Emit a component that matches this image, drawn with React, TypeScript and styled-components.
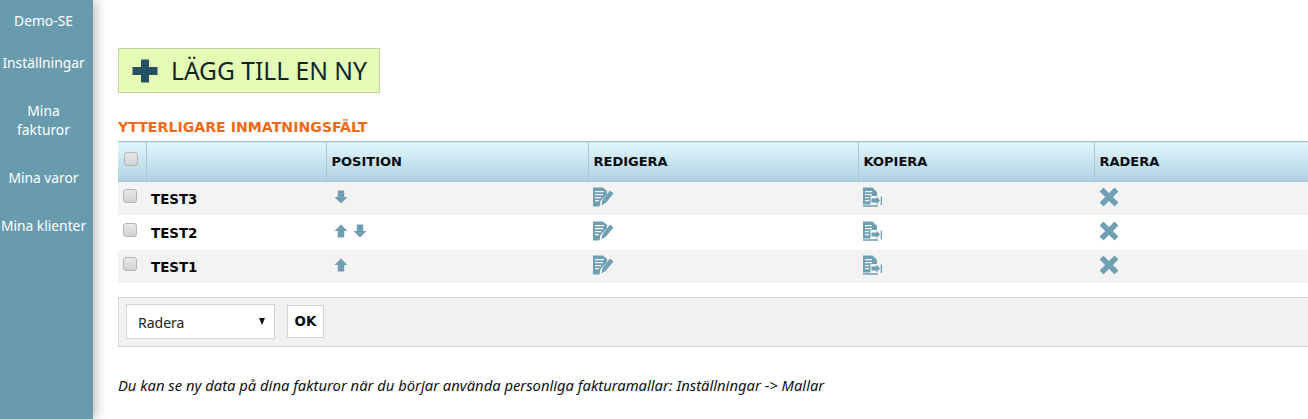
import React from "react";
import styled, { createGlobalStyle } from "styled-components";

const Global = createGlobalStyle`
  html, body { margin: 0; padding: 0; background: #fff; overflow: hidden; }
  body { font-family: "Noto Sans", "DejaVu Sans", sans-serif; }
`;

const Page = styled.div`
  display: flex;
  width: 1308px;
  height: 419px;
  overflow: hidden;
`;

const Sidebar = styled.nav`
  flex: 0 0 93px;
  height: 419px;
  background: #699bae;
  box-shadow: 2px 0 12px rgba(0, 0, 0, 0.3);
  display: flex;
  flex-direction: column;
  align-items: center;
  padding: 11px 6px 0 0;
  box-sizing: border-box;
`;

const NavItem = styled.a<{ $gap: number }>`
  color: #fff;
  font-size: 13.8px;
  line-height: 19px;
  text-align: center;
  white-space: pre;
  margin-bottom: ${(p) => p.$gap}px;
`;

const Main = styled.main`
  flex: 1;
  min-width: 0;
  padding: 48px 0 0 25px;
`;

const AddButton = styled.button`
  display: flex;
  align-items: center;
  gap: 13px;
  width: 262px;
  height: 45px;
  padding: 0 0 0 13px;
  box-sizing: border-box;
  background: #e5fcb6;
  border: 1px solid #c3d2a4;
  color: #0f2527;
  font-family: "Noto Sans", sans-serif;
  font-size: 24.6px;
  white-space: nowrap;
`;

const Heading = styled.h2`
  margin: 25px 0 5px;
  color: #ef6a17;
  font-family: "DejaVu Sans", sans-serif;
  font-size: 14.15px;
  line-height: 18px;
  font-weight: 700;
  white-space: nowrap;
`;

const Table = styled.table`
  border-collapse: collapse;
  table-layout: fixed;
  width: 1190px;
`;

const Head = styled.th<{ $w: number }>`
  width: ${(p) => p.$w}px;
  height: 40px;
  padding: 0 0 0 5px;
  box-sizing: border-box;
  background: linear-gradient(#e2f7fe, #aed0e0);
  border-top: 1px solid #a5c8d6;
  border-bottom: 1px solid #a5c8d6;
  border-left: 1px solid #a5c8d6;
  text-align: left;
  font-family: "DejaVu Sans", sans-serif;
  font-size: 13px;
  font-weight: 700;
  color: #050c10;
  &:first-child {
    border-left: none;
    padding-left: 6px;
  }
`;

const Row = styled.tr<{ $shade: boolean }>`
  height: ${(p) => (p.$shade ? 33 : 35)}px;
  background: ${(p) => (p.$shade ? "#f3f3f3" : "#fff")};
`;

const Cell = styled.td`
  padding: 0 0 0 5px;
  vertical-align: middle;
`;

const IconCell = styled(Cell)`
  padding-bottom: 3px;
`;

const NameCell = styled(Cell)`
  padding-top: 2px;
  font-family: "DejaVu Sans", sans-serif;
  font-size: 13.4px;
  font-weight: 700;
  color: #050505;
`;

const Check = styled.span`
  display: block;
  width: 12px;
  height: 12px;
  margin: -5px 0 0 0;
  border: 1px solid #b5b5b5;
  border-radius: 3px;
  background: linear-gradient(#e9e9e9, #d2d2d2);
`;

const Icons = styled.span`
  display: flex;
  align-items: center;
  gap: 5px;
  margin-left: 3px;
`;

const IconSvg = styled.svg`
  display: block;
  fill: #6f9fb2;
`;

const BulkBar = styled.div`
  display: flex;
  align-items: center;
  margin-top: 14px;
  width: 1200px;
  height: 50px;
  padding-left: 7px;
  box-sizing: border-box;
  background: #f1f1f1;
  border: 1px solid #d4d4d4;
`;

const SelectBox = styled.div`
  display: flex;
  align-items: center;
  justify-content: space-between;
  width: 149px;
  height: 35px;
  padding: 0 9px 0 11px;
  box-sizing: border-box;
  background: #fff;
  border: 1px solid #d4d4d4;
  font-size: 14px;
  color: #222;
`;

const SelectLabel = styled.span`
  padding-top: 2px;
`;

const Caret = styled.span`
  width: 0;
  height: 0;
  border-left: 3.5px solid transparent;
  border-right: 3.5px solid transparent;
  border-top: 7px solid #111;
`;

const OkButton = styled.button`
  width: 37px;
  height: 33px;
  margin-left: 12px;
  padding: 0;
  background: #fff;
  border: 1px solid #d4d4d4;
  font-family: "DejaVu Sans", sans-serif;
  font-size: 13.4px;
  font-weight: 700;
  color: #0a0a0a;
`;

const Note = styled.p`
  margin: 29px 0 0;
  font-size: 14.77px;
  line-height: 18px;
  font-style: italic;
  color: #111;
  white-space: nowrap;
`;

const Up = () => (
  <IconSvg width="14" height="14" viewBox="0 0 14 14">
    <path d="M7 0.5 L13.5 7 L10.2 7 L10.2 13.5 L3.8 13.5 L3.8 7 L0.5 7 Z" />
  </IconSvg>
);

const Down = () => (
  <IconSvg width="14" height="14" viewBox="0 0 14 14">
    <path d="M7 13.5 L13.5 7 L10.2 7 L10.2 0.5 L3.8 0.5 L3.8 7 L0.5 7 Z" />
  </IconSvg>
);

const Edit = () => (
  <IconSvg width="21" height="20" viewBox="0 0 21 20">
    <path
      d="M0 0.5 H10 L14 4 V7 L7.5 14 L6.5 19.5 H0 Z M2 4 V5.2 H11 V4 Z M2 7 V8.2 H10 V7 Z M2 10 V11.2 H8 V10 Z M2 13 V14.2 H6 V13 Z"
      fillRule="evenodd"
    />
    <path d="M17 3.5 L20.5 6.5 L13 15.5 L8.5 18.5 L9.5 13 Z" />
  </IconSvg>
);

const Copy = () => (
  <IconSvg width="20" height="20" viewBox="0 0 20 20">
    <path
      d="M0 0.5 H9.5 L14 5 V9 H7.5 V17.5 H0 Z M2 4 V5.2 H9 V4 Z M2 7 V8.2 H9 V7 Z M2 10 V11.2 H6 V10 Z M2 13 V14.2 H6 V13 Z"
      fillRule="evenodd"
    />
    <path d="M8.5 11.5 H13.5 V9.5 L17 13.5 L13.5 17.5 V15.5 H8.5 Z M17.7 9.5 H19 V18 H17.7 Z M0 18.3 H15 V19.8 H0 Z" />
  </IconSvg>
);

const Cross = () => (
  <IconSvg width="20" height="20" viewBox="0 0 20 20">
    <path
      d="M4.5 1.5 L10 7 L15.5 1.5 L18.5 4.5 L13 10 L18.5 15.5 L15.5 18.5 L10 13 L4.5 18.5 L1.5 15.5 L7 10 L1.5 4.5 Z"
      stroke="#6f9fb2"
      strokeWidth="1.2"
      strokeLinejoin="round"
    />
  </IconSvg>
);

const Plus = () => (
  <svg width="26" height="24" viewBox="0 0 26 24" fill="#264f63">
    <path d="M9 0.5 H17 V8 H25.5 V16 H17 V23.5 H9 V16 H0.5 V8 H9 Z" />
  </svg>
);

const nav = [
  { label: "Demo-SE", gap: 23 },
  { label: "Inställningar", gap: 29 },
  { label: "Mina\nfakturor", gap: 29 },
  { label: "Mina varor", gap: 29 },
  { label: "Mina klienter", gap: 0 },
];

const rows = [
  { name: "TEST3", up: false, down: true },
  { name: "TEST2", up: true, down: true },
  { name: "TEST1", up: true, down: false },
];

export default function App() {
  return (
    <Page>
      <Global />
      <Sidebar>
        {nav.map((n) => (
          <NavItem key={n.label} $gap={n.gap}>
            {n.label}
          </NavItem>
        ))}
      </Sidebar>
      <Main>
        <AddButton>
          <Plus />
          LÄGG TILL EN NY
        </AddButton>
        <Heading>YTTERLIGARE INMATNINGSFÄLT</Heading>
        <Table>
          <thead>
            <tr>
              <Head $w={28}><Check /></Head>
              <Head $w={180} />
              <Head $w={262}>POSITION</Head>
              <Head $w={270}>REDIGERA</Head>
              <Head $w={236}>KOPIERA</Head>
              <Head $w={214}>RADERA</Head>
            </tr>
          </thead>
          <tbody>
            {rows.map((r, i) => (
              <Row key={r.name} $shade={i !== 1}>
                <Cell><Check /></Cell>
                <NameCell>{r.name}</NameCell>
                <IconCell>
                  <Icons>
                    {r.up && <Up />}
                    {r.down && <Down />}
                  </Icons>
                </IconCell>
                <IconCell><Edit /></IconCell>
                <IconCell><Copy /></IconCell>
                <IconCell><Cross /></IconCell>
              </Row>
            ))}
          </tbody>
        </Table>
        <BulkBar>
          <SelectBox>
            <SelectLabel>Radera</SelectLabel>
            <Caret />
          </SelectBox>
          <OkButton>OK</OkButton>
        </BulkBar>
        <Note>Du kan se ny data på dina fakturor när du börjar använda personliga fakturamallar: Inställningar -&gt; Mallar</Note>
      </Main>
    </Page>
  );
}
